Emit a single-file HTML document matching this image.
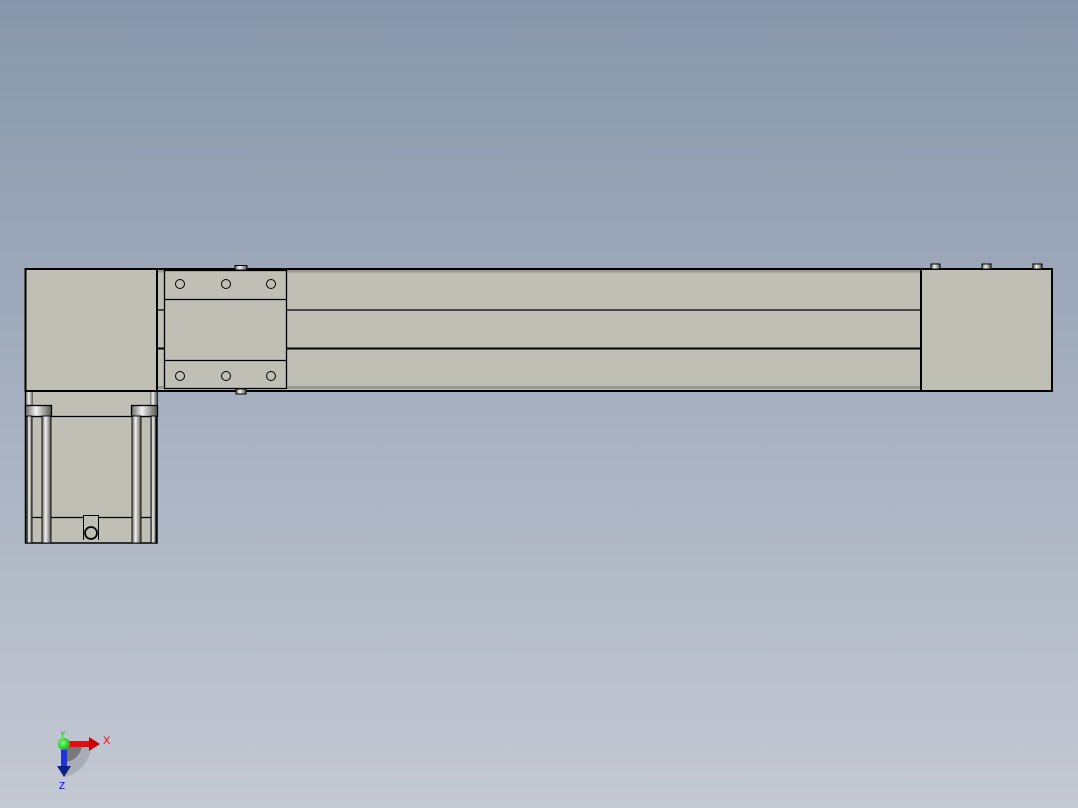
<!DOCTYPE html>
<html><head><meta charset="utf-8"><style>
html,body{margin:0;padding:0;width:1078px;height:808px;overflow:hidden}
body{background:linear-gradient(to bottom,#8797ab 0%,#a6b0c0 50%,#c4c9d3 100%)}
svg{position:absolute;left:0;top:0}
</style></head><body>
<svg width="1078" height="808" viewBox="0 0 1078 808" xmlns="http://www.w3.org/2000/svg">
<defs>
<linearGradient id="cyl" x1="0" x2="1" y1="0" y2="0">
<stop offset="0" stop-color="#6a6a66"/><stop offset="0.4" stop-color="#f2f2ee"/><stop offset="1" stop-color="#55554f"/>
</linearGradient>
<radialGradient id="ball" cx="0.4" cy="0.4" r="0.6"><stop offset="0" stop-color="#7dff7d"/><stop offset="1" stop-color="#18b818"/></radialGradient>
</defs>
<g stroke="#000" fill="#bfbfb6">
<rect x="157" y="269" width="764" height="122" stroke-width="2"/>
<rect x="158" y="270" width="762" height="2.5" fill="#9a9a94" stroke="none"/>
<rect x="158" y="386" width="762" height="3" fill="#9a9a94" stroke="none"/>
<line x1="157" y1="310" x2="921" y2="310" stroke-width="1.2"/>
<line x1="157" y1="348.5" x2="921" y2="348.5" stroke-width="2"/>
<rect x="164.5" y="270.5" width="122" height="118" stroke-width="1.3"/>
<line x1="164" y1="299.5" x2="287" y2="299.5" stroke-width="1.2"/>
<line x1="164" y1="360.5" x2="287" y2="360.5" stroke-width="1.2"/>
<g fill="none" stroke-width="1">
<circle cx="180" cy="284" r="4.5"/><circle cx="226" cy="284" r="4.5"/><circle cx="271" cy="284" r="4.5"/>
<circle cx="180" cy="376" r="4.5"/><circle cx="226" cy="376" r="4.5"/><circle cx="271" cy="376" r="4.5"/>
</g>
<rect x="235" y="265.5" width="12" height="4.5" fill="url(#cyl)"/>
<rect x="236" y="389" width="10" height="5" fill="url(#cyl)"/>
<rect x="921" y="269" width="131" height="122" stroke-width="2"/>
<rect x="931" y="264" width="9" height="5" fill="url(#cyl)"/>
<rect x="982" y="264" width="9" height="5" fill="url(#cyl)"/>
<rect x="1033" y="264" width="9" height="5" fill="url(#cyl)"/>
<rect x="25.5" y="391" width="131.5" height="152" stroke-width="1.5"/>
<line x1="25" y1="416.5" x2="157" y2="416.5" stroke-width="1.2"/>
<line x1="25" y1="517.5" x2="157" y2="517.5" stroke-width="1.2"/>
<rect x="26" y="392" width="7" height="13" fill="url(#cyl)" stroke="none"/>
<rect x="150" y="392" width="7" height="13" fill="url(#cyl)" stroke="none"/>
<rect x="25.5" y="405.5" width="26" height="11" fill="url(#cyl)" stroke-width="1.3"/>
<rect x="131.5" y="405.5" width="26" height="11" fill="url(#cyl)" stroke-width="1.3"/>
<rect x="27" y="416" width="5" height="127" fill="url(#cyl)" stroke-width="0.9"/>
<rect x="42" y="416" width="9" height="127" fill="url(#cyl)" stroke-width="0.9"/>
<rect x="132" y="416" width="9" height="127" fill="url(#cyl)" stroke-width="0.9"/>
<rect x="151" y="416" width="5" height="127" fill="url(#cyl)" stroke-width="0.9"/>
<path d="M83.5 540 V515.5 H98.5 V540" fill="#bfbfb6" stroke-width="1"/>
<circle cx="91" cy="533" r="6" fill="#bfbfb6" stroke-width="1.8"/>
<rect x="25.5" y="269" width="131.5" height="122" stroke-width="2"/>
</g>
<path d="M64 744 L64 777 A33 33 0 0 0 91 744 Z" fill="#8a8d94" opacity="0.45"/>
<path d="M64 744 L64 762 A18 18 0 0 0 82 744 Z" fill="#555" opacity="0.6"/>
<rect x="61" y="744" width="6" height="23" fill="#2233dd"/>
<path d="M57 766 L71 766 L64 777 Z" fill="#10208a"/>
<rect x="64" y="741" width="26" height="6" fill="#e01010"/>
<path d="M89 737 L100 744 L89 751 Z" fill="#c00"/>
<circle cx="64" cy="744" r="6" fill="url(#ball)"/>
<text x="103" y="744" font-family="Liberation Sans,sans-serif" font-size="11" fill="#f00">X</text>
<text x="60" y="737" font-family="Liberation Sans,sans-serif" font-size="8" fill="#0c0">Y</text>
<text x="59" y="789" font-family="Liberation Sans,sans-serif" font-size="10" fill="#00f">Z</text>
</svg>
</body></html>
